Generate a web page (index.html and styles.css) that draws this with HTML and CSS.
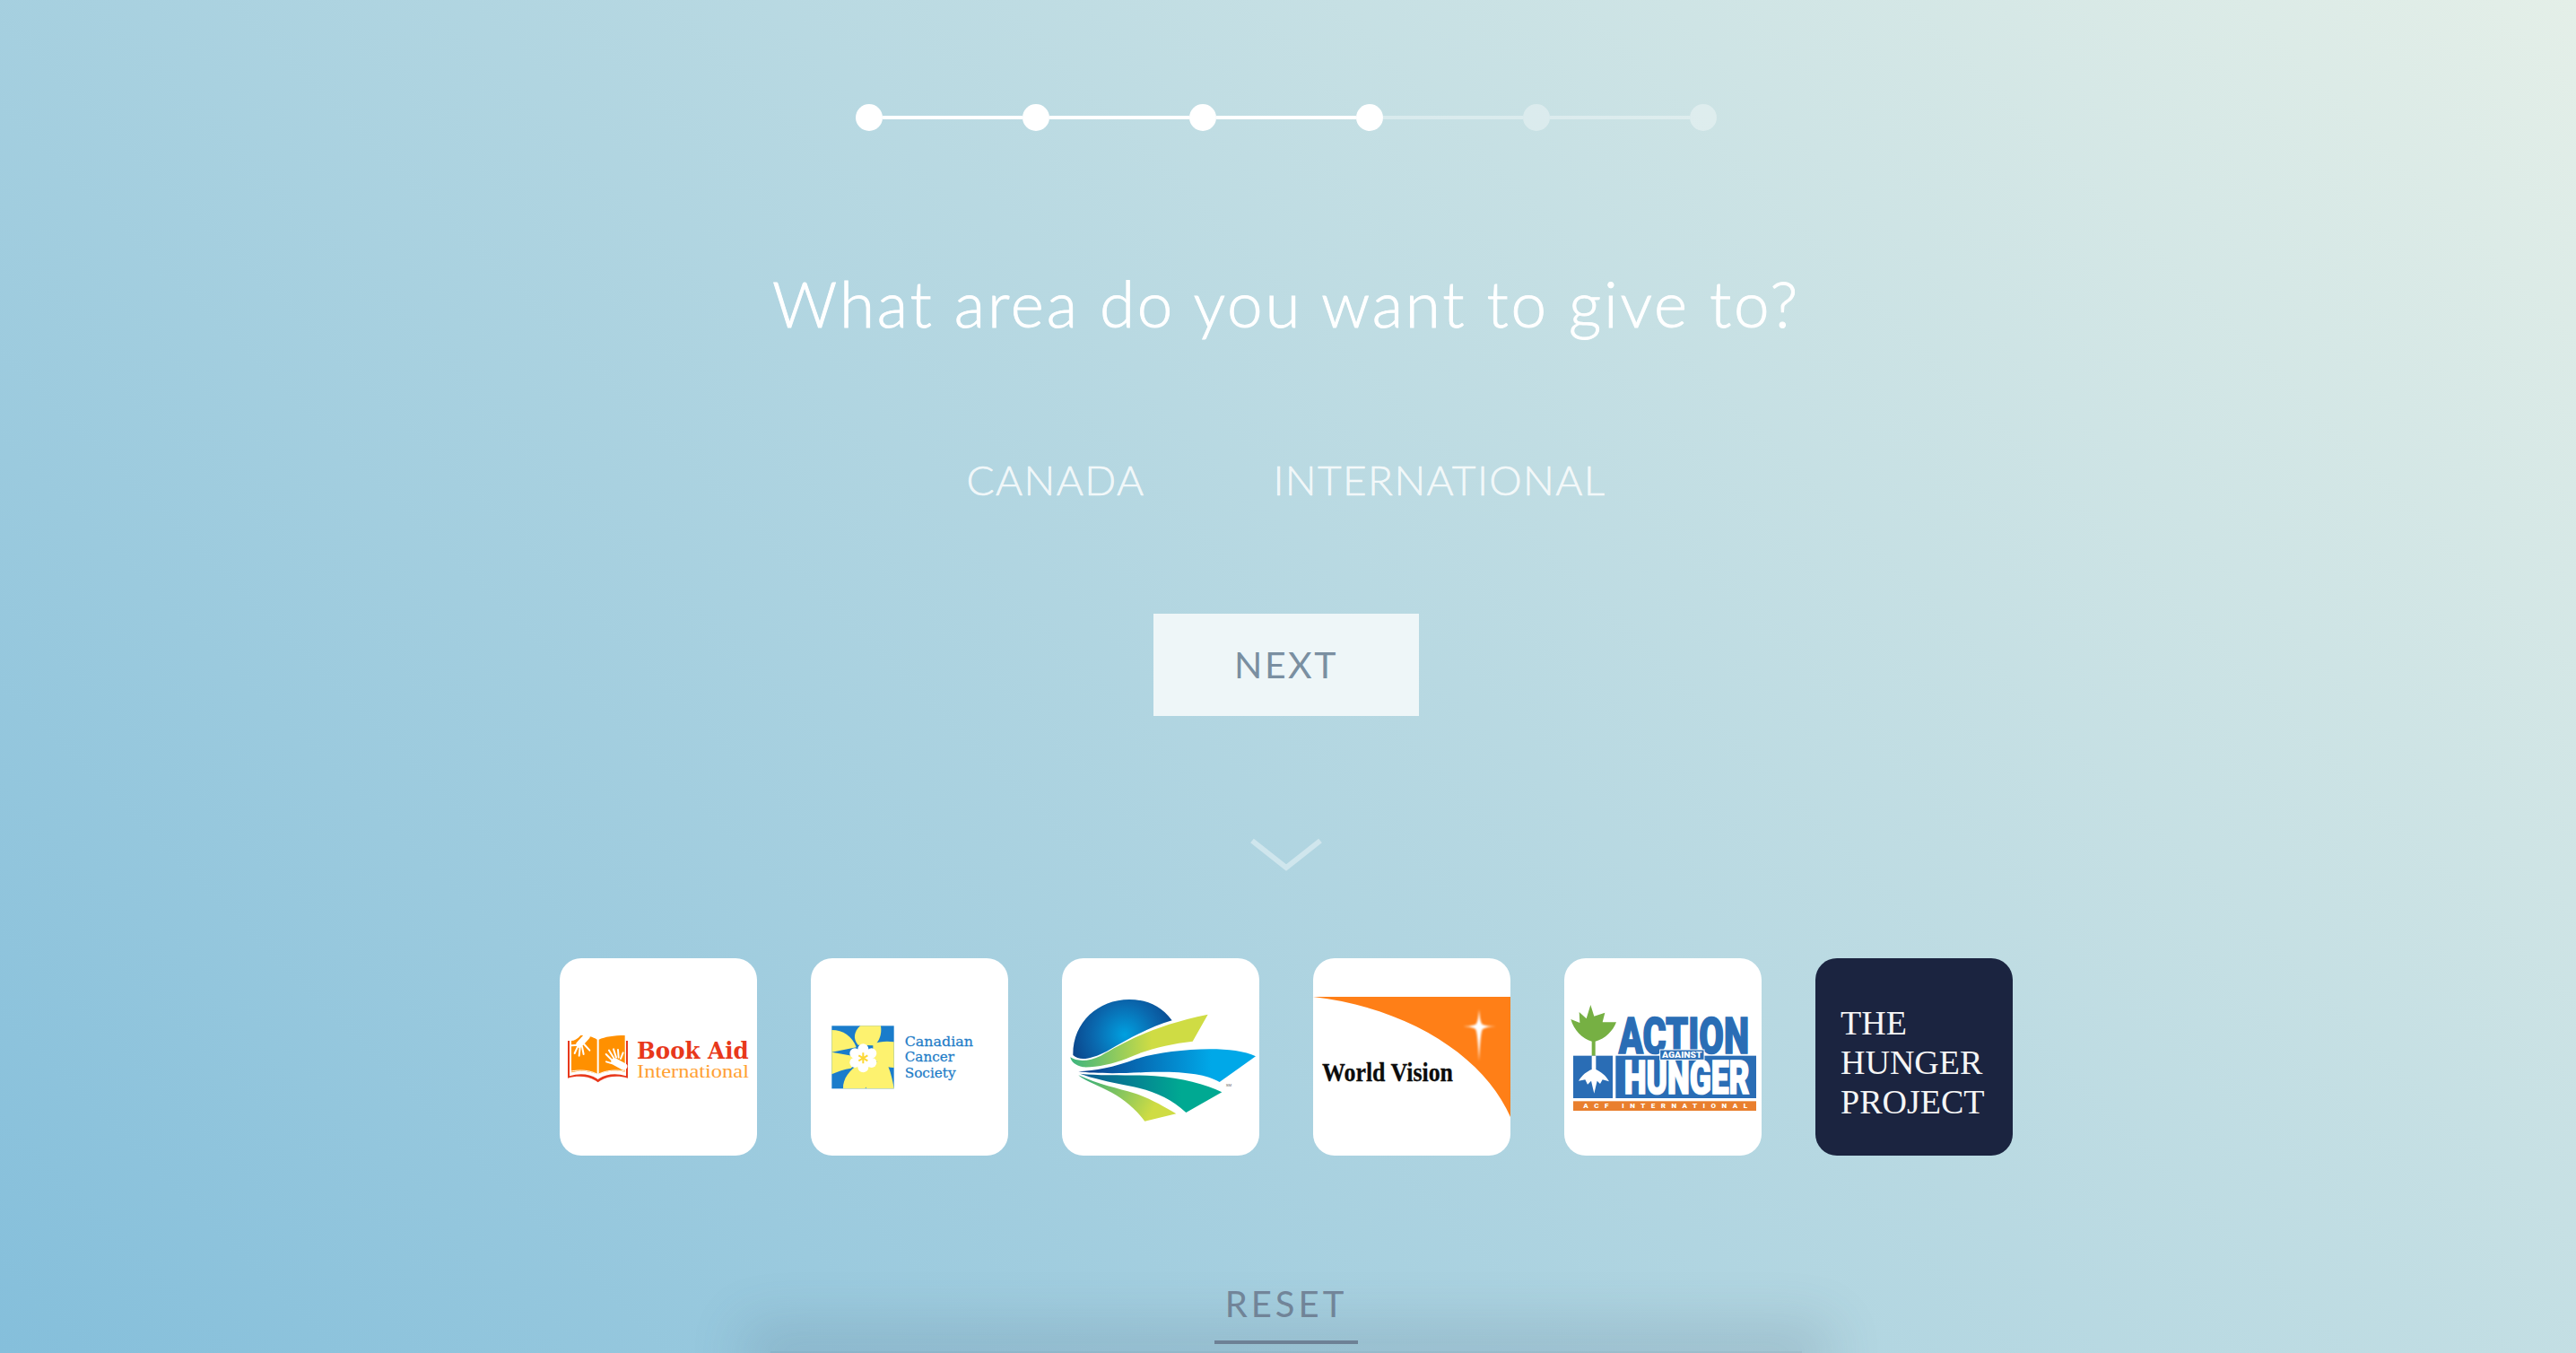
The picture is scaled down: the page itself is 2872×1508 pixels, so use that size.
FILE: index.html
```html
<!DOCTYPE html>
<html lang="en">
<head>
  <meta charset="UTF-8">
  <meta name="viewport" content="width=device-width, initial-scale=1">
  <title>Give</title>
  <link rel="stylesheet" href="styles.css">
</head>
<body>
  <div class="stepper">
    <span class="dot"></span><span class="line"></span>
    <span class="dot"></span><span class="line"></span>
    <span class="dot"></span><span class="line"></span>
    <span class="dot"></span><span class="line faded"></span>
    <span class="dot faded"></span><span class="line faded"></span>
    <span class="dot faded"></span>
  </div>

  <h1>What area do you want to give to?</h1>

  <div class="options">
    <span>CANADA</span>
    <span>INTERNATIONAL</span>
  </div>

  <button class="next">NEXT</button>

  <svg class="chevron" viewBox="0 0 80 38" width="80" height="38">
    <polyline points="2,3 40,33 78,3" fill="none" stroke="#fff" stroke-opacity="0.4" stroke-width="6"/>
  </svg>

  <div class="tiles">
    <!-- Book Aid -->
    <div class="tile">
      <svg viewBox="0 0 660 660" width="220" height="220">
        <g transform="translate(0 186)">
          <path d="M27 90h6v118c32-10 66-8 92 9l3 3 3-3c26-17 60-19 91-9V90h6v125c-32-9-66-7-91 8l-9 6-9-6c-25-15-60-17-92-8z" fill="#e8381b"/>
          <path d="M70 72c22 0 42 5 55 14v116c-26-12-60-14-86-6V90c10 0 20-6 31-18z" fill="#ff9000"/>
          <path d="M131 86c20-9 50-14 87-14v122c-30-6-62-4-87 8z" fill="#ff9000"/>
          <path d="M39 192c30-6 62-3 86 9M131 201c24-12 56-15 87-9" fill="none" stroke="#fff" stroke-width="3"/>
          <g fill="none" stroke="#fff" stroke-linecap="round">
            <path d="M90 76L66 102" stroke-width="22"/>
            <path d="M60 104L40 106M60 110L50 132M68 112L65 140M75 110L80 135M82 102L100 122" stroke-width="6"/>
            <path d="M184 160L214 176" stroke-width="24"/>
            <path d="M176 156L155 135M181 148L165 122M189 146L180 118M197 146L195 120M204 150L212 130M176 166L156 160" stroke-width="6"/>
          </g>
          <text class="logo-slab" x="258" y="150" font-size="78" fill="#e8381b" textLength="374" lengthAdjust="spacingAndGlyphs">Book Aid</text>
          <text class="logo-serif" x="258" y="214" font-size="62" fill="#ffa033" textLength="375" lengthAdjust="spacingAndGlyphs">International</text>
        </g>
      </svg>
    </div>

    <!-- Canadian Cancer Society -->
    <div class="tile">
      <svg viewBox="0 0 660 660" width="220" height="220">
        <g transform="translate(48 186)">
          <rect x="22" y="40" width="208" height="210" fill="#1a7ccb"/>
          <g fill="#fdf26f">
            <path d="M118 40h68c4 28-4 50-22 66l-54-2c-18-20-14-46 8-64z"/>
            <path d="M160 100c22-8 48-10 70-6v86c-28 0-52-12-70-32z"/>
            <path d="M140 168c24-14 52-10 70 6 10 24 16 50 20 76h-92c-14-24-16-54 2-82z"/>
            <path d="M114 168c-32 18-56 50-54 82h74c10-26 4-60-20-82z"/>
            <path d="M22 128l76 14c4 16 0 32-12 40-22 2-44 12-64 20z"/>
            <path d="M22 54c38 0 68 20 82 58l-82 16z"/>
          </g>
          <g fill="#fff">
            <circle cx="127" cy="148" r="30"/>
            <circle cx="127" cy="118" r="18"/>
            <circle cx="155" cy="132" r="17"/>
            <circle cx="155" cy="163" r="17"/>
            <circle cx="127" cy="178" r="18"/>
            <circle cx="99" cy="163" r="17"/>
            <circle cx="99" cy="132" r="17"/>
          </g>
          <path d="M127 130v36M112 139l30 18M142 139l-30 18" stroke="#fdd835" stroke-width="6"/>
          <g fill="#1f7dc8" stroke="#1f7dc8" stroke-width="0.8">
            <text class="logo-dejavu" x="266" y="108" font-size="47" textLength="229" lengthAdjust="spacingAndGlyphs">Canadian</text>
            <text class="logo-dejavu" x="266" y="160" font-size="47" textLength="166" lengthAdjust="spacingAndGlyphs">Cancer</text>
            <text class="logo-dejavu" x="266" y="212" font-size="47" textLength="171" lengthAdjust="spacingAndGlyphs">Society</text>
          </g>
        </g>
      </svg>
    </div>

    <!-- swirl -->
    <div class="tile">
      <svg viewBox="0 0 660 660" width="220" height="220">
        <defs>
          <radialGradient id="globe" gradientUnits="userSpaceOnUse" cx="210" cy="160" r="190">
            <stop offset="0" stop-color="#00a0e0"/>
            <stop offset="0.55" stop-color="#0a68ae"/>
            <stop offset="1" stop-color="#0b4288"/>
          </radialGradient>
          <linearGradient id="limeA" gradientUnits="userSpaceOnUse" x1="40" y1="0" x2="300" y2="0">
            <stop offset="0" stop-color="#43b67c"/>
            <stop offset="1" stop-color="#cfdc44"/>
          </linearGradient>
          <linearGradient id="blueB" gradientUnits="userSpaceOnUse" x1="90" y1="0" x2="500" y2="0">
            <stop offset="0" stop-color="#0a4391"/>
            <stop offset="1" stop-color="#00a8e8"/>
          </linearGradient>
          <linearGradient id="tealC" gradientUnits="userSpaceOnUse" x1="70" y1="0" x2="400" y2="0">
            <stop offset="0" stop-color="#0a5a92"/>
            <stop offset="1" stop-color="#00a992"/>
          </linearGradient>
          <linearGradient id="limeD" gradientUnits="userSpaceOnUse" x1="70" y1="300" x2="300" y2="420">
            <stop offset="0" stop-color="#35ad7a"/>
            <stop offset="1" stop-color="#cfdc44"/>
          </linearGradient>
        </defs>
        <g transform="translate(0 96)">
          <path d="M368 112C330 60 280 42 225 42 120 42 35 120 37 228c23 22 63 12 113-13 70-40 140-80 218-103z" fill="url(#globe)"/>
          <path d="M488 92l-51 90c-77 8-157 28-222 58-45 18-105 30-145 28-25-6-40-18-42-33 22 15 62 15 102-5 70-40 170-100 358-138z" fill="url(#limeA)"/>
          <path d="M648 232l-121 86c-47-28-127-36-247-33-80 5-170 5-225-2 55-3 115-13 195-43 100-30 310-50 398-8z" fill="url(#blueB)"/>
          <path d="M535 352l-120 68c-55-50-115-75-195-90-60-12-120-25-160-40 70 8 170 2 250 8 90 7 170 27 225 54z" fill="url(#tealC)"/>
          <path d="M382 424l-105 25c-37-49-77-79-127-104-40-20-80-35-95-50 65 30 135 45 185 60 50 15 100 45 142 69z" fill="url(#limeD)"/>
          <text class="logo-sans" x="548" y="332" font-size="13" fill="#666">SM</text>
        </g>
      </svg>
    </div>

    <!-- World Vision -->
    <div class="tile">
      <svg viewBox="0 0 220 220" width="220" height="220">
        <defs>
          <filter id="glow" x="-30%" y="-30%" width="160%" height="160%"><feGaussianBlur stdDeviation="1.2"/></filter>
        </defs>
        <path d="M0 43H220V177C192 112 110 56 0 43Z" fill="#ff7f17"/>
        <path d="M185 57c1 12 2 15 4 17 3 1 8 2 15 2-7 0-12 1-15 3-2 3-3 16-4 36-1-20-2-33-4-36-3-2-8-3-16-3 8 0 13-1 16-2 2-2 3-5 4-17z" fill="#fff" filter="url(#glow)"/>
        <text class="logo-serif-bold" x="10" y="137" font-size="30" fill="#0c0c0c" stroke="#0c0c0c" stroke-width="0.3" textLength="146" lengthAdjust="spacingAndGlyphs">World Vision</text>
      </svg>
    </div>

    <!-- Action Against Hunger -->
    <div class="tile">
      <svg viewBox="0 0 660 660" width="220" height="220">
        <g transform="translate(0 126)">
          <path d="M88 30l12 38 36-12-8 32 46 0c-12 30-36 55-70 64v50H92v-50C60 142 32 115 22 78l30 12-2-36 24 22z" fill="#76b043"/>
          <rect x="30" y="200" width="132" height="142" fill="#2a6db5"/>
          <path d="M92 200h14v46c16 8 32 18 44 40l-22-6-8 14-10-10-10 42-10-42-12 12-8-16-22 4c12-20 28-32 44-38z" fill="#fff"/>
          <text class="logo-heavy" x="182" y="192" font-size="168" fill="#2a6db5" stroke="#2a6db5" stroke-width="5" textLength="436" lengthAdjust="spacingAndGlyphs">ACTION</text>
          <rect x="172" y="200" width="470" height="142" fill="#2a6db5"/>
          <text class="logo-heavy" x="200" y="328" font-size="158" fill="#fff" stroke="#fff" stroke-width="5" textLength="420" lengthAdjust="spacingAndGlyphs">HUNGER</text>
          <rect x="320" y="180" width="148" height="34" fill="#2a6db5" stroke="#fff" stroke-width="3"/>
          <text class="logo-heavy" x="327" y="206" font-size="26" fill="#fff" textLength="134" lengthAdjust="spacingAndGlyphs">AGAINST</text>
          <rect x="30" y="352" width="612" height="32" fill="#e97f2e"/>
          <text class="logo-heavy" x="64" y="376" font-size="24" fill="#fff" textLength="548" lengthAdjust="spacing">ACF INTERNATIONAL</text>
        </g>
      </svg>
    </div>

    <!-- The Hunger Project -->
    <div class="tile tile-dark">THE<br>HUNGER<br>PROJECT</div>
  </div>

  <a class="reset">RESET</a>

  <div class="page-shadow"></div>
</body>
</html>
```

FILE: styles.css
```css
body {
  font-family: 'Lato', 'Open Sans', sans-serif;
  font-weight: 300;
  margin: 0;
  height: 1508px;
  padding: 116px 4px 0 0;
  box-sizing: border-box;
  overflow: hidden;
  display: flex;
  flex-direction: column;
  align-items: center;
  color: #fff;
  background: linear-gradient(45deg, #85bfdb 0%, #e4efe8 100%);
}
body > * {
  flex: none;
}

/* progress dots */
.stepper {
  display: flex;
  align-items: center;
}
.dot {
  width: 30px;
  height: 30px;
  border-radius: 50%;
  background: #fff;
}
.line {
  width: 156px;
  height: 4px;
  background: #fff;
}
.dot.faded, .line.faded {
  background: rgba(255, 255, 255, 0.35);
}

h1 {
  font-size: 71px;
  font-weight: 300;
  line-height: 86px;
  letter-spacing: 2.8px;
  -webkit-text-stroke: 0.9px #fff;
  margin: 149px 0 0;
}

.options {
  display: flex;
  gap: 143px;
  margin-top: 126px;
  font-size: 46px;
  line-height: 56px;
  letter-spacing: 1.4px;
  color: rgba(255, 255, 255, 0.8);
  -webkit-text-stroke: 0.6px rgba(255, 255, 255, 0.8);
}

.next {
  width: 296px;
  height: 114px;
  margin-top: 121px;
  border: 0;
  padding: 0 0 2px;
  background: #eef6f8;
  color: #7a8fa1;
  font-family: inherit;
  font-size: 41px;
  font-weight: 400;
  letter-spacing: 2.5px;
}

.chevron {
  display: block;
  margin-top: 136px;
}

.tiles {
  display: flex;
  gap: 60px;
  margin-top: 96px;
}
.tile {
  width: 220px;
  height: 220px;
  border-radius: 24px;
  background: #fff;
  overflow: hidden;
}
.tile svg {
  display: block;
}
.tile-dark {
  box-sizing: border-box;
  padding: 50px 0 0 28px;
  background: #1b2440;
  color: #f5f5f5;
  font-family: 'Liberation Serif', serif;
  font-size: 38px;
  font-weight: 400;
  line-height: 44px;
}

/* logo lettering */
.logo-slab {
  font-family: 'DejaVu Serif', serif;
  font-weight: 700;
}
.logo-dejavu {
  font-family: 'DejaVu Serif', serif;
}
.logo-serif {
  font-family: 'Liberation Serif', serif;
}
.logo-serif-bold {
  font-family: 'Liberation Serif', serif;
  font-weight: 700;
}
.logo-sans {
  font-family: 'Liberation Sans', sans-serif;
}
.logo-heavy {
  font-family: 'Roboto', sans-serif;
  font-weight: 900;
}

.reset {
  box-sizing: border-box;
  width: 160px;
  margin-top: 141px;
  padding-bottom: 17px;
  border-bottom: 4px solid #74879b;
  text-align: center;
  color: #74879b;
  font-size: 40px;
  font-weight: 400;
  line-height: 48px;
  letter-spacing: 4px;
}

/* only the shadow of the next section shows at the fold */
.page-shadow {
  width: 1150px;
  height: 2px;
  margin-top: 8px;
  background: rgba(70, 90, 110, 0.18);
  box-shadow: 0 0 60px 30px rgba(70, 90, 110, 0.18);
}
```
